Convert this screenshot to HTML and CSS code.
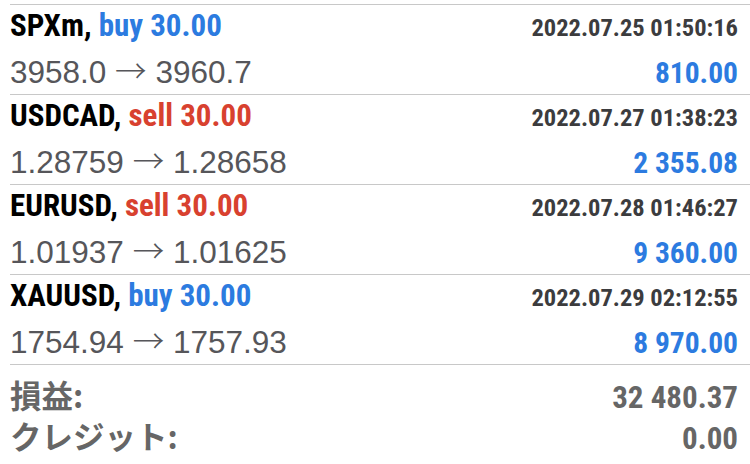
FILE: index.html
```html
<!DOCTYPE html>
<html lang="ja">
<head>
  <meta charset="UTF-8">
  <title>履歴</title>
  <link rel="stylesheet" href="styles.css">
</head>
<body>
  <div class="history">
    <div class="deal">
      <div class="line top">
        <span class="title">SPXm, <span class="buy">buy 30.00</span></span>
        <span class="time">2022.07.25 01:50:16</span>
      </div>
      <div class="line bottom">
        <span class="prices">3958.0 <span class="arrow">→</span> 3960.7</span>
        <span class="profit">810.00</span>
      </div>
    </div>
    <div class="deal">
      <div class="line top">
        <span class="title">USDCAD, <span class="sell">sell 30.00</span></span>
        <span class="time">2022.07.27 01:38:23</span>
      </div>
      <div class="line bottom">
        <span class="prices">1.28759 <span class="arrow">→</span> 1.28658</span>
        <span class="profit">2 355.08</span>
      </div>
    </div>
    <div class="deal">
      <div class="line top">
        <span class="title">EURUSD, <span class="sell">sell 30.00</span></span>
        <span class="time">2022.07.28 01:46:27</span>
      </div>
      <div class="line bottom">
        <span class="prices">1.01937 <span class="arrow">→</span> 1.01625</span>
        <span class="profit">9 360.00</span>
      </div>
    </div>
    <div class="deal">
      <div class="line top">
        <span class="title">XAUUSD, <span class="buy">buy 30.00</span></span>
        <span class="time">2022.07.29 02:12:55</span>
      </div>
      <div class="line bottom">
        <span class="prices">1754.94 <span class="arrow">→</span> 1757.93</span>
        <span class="profit">8 970.00</span>
      </div>
    </div>
    <div class="summary">
      <div class="line total">
        <span class="label">損益:</span>
        <span class="value">32 480.37</span>
      </div>
      <div class="line total">
        <span class="label">クレジット:</span>
        <span class="value">0.00</span>
      </div>
    </div>
  </div>
</body>
</html>
```

FILE: styles.css
```css
html, body { margin: 0; padding: 0; background: #fff; }
body { font-family: "Liberation Sans", Arial, sans-serif; }
.history { padding-top: 4px; }
.deal, .summary { margin-left: 10px; border-top: 1px solid #c8c8c8; padding-right: 12px; box-sizing: border-box; }
.deal { height: 90px; }
.line { display: flex; justify-content: space-between; align-items: baseline; }
.top { height: 42px; line-height: 42px; }
.bottom { height: 44px; line-height: 44px; }
.title, .time, .profit, .value { font-family: "Roboto Condensed", "Roboto", sans-serif; font-stretch: condensed; font-weight: bold; }
.title { font-size: 31px; color: #000; }
.buy { color: #2c7be0; }
.sell { color: #d8412f; }
.time { font-size: 24.5px; color: #3c3c3e; }
.prices { font-size: 31.5px; color: #56565a; }
.arrow { font-family: "Noto Sans CJK JP", sans-serif; font-weight: 300; }
.profit { font-size: 29.5px; color: #2c7be0; }
.summary { padding-top: 9px; }
.total { height: 41px; line-height: 41px; }
.label { font-family: "Noto Sans CJK JP", sans-serif; font-weight: bold; font-size: 31.5px; color: #666; }
.value { font-size: 31px; color: #666; }
```
